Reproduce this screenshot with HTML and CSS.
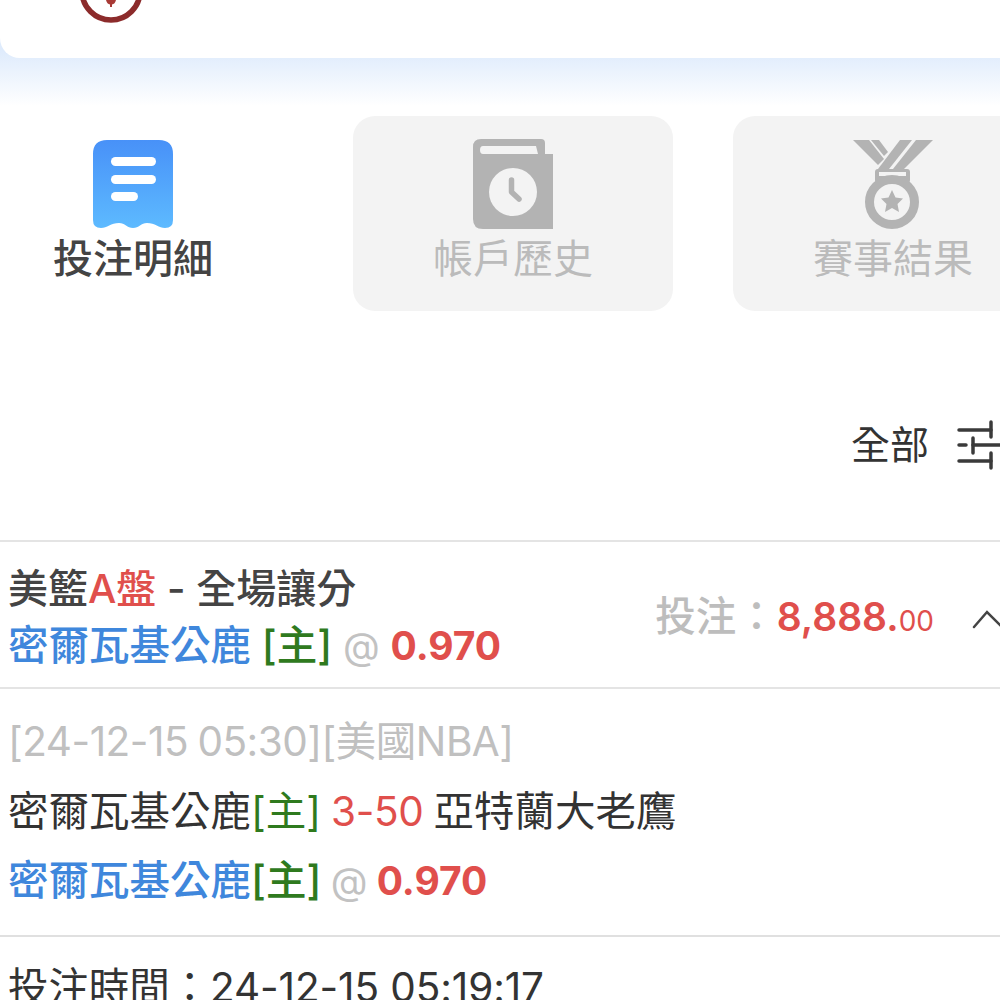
FILE: index.html
```html
<!DOCTYPE html>
<html lang="zh-Hant">

<head>
    <meta charset="UTF-8">
    <meta name="viewport" content="width=device-width, initial-scale=1.0">
    <title>投注明細</title>
    <link rel="stylesheet" href="styles.css">
</head>

<body>

    <div class="top">
        <div class="top-card">
            <svg class="logo" width="66" height="24" viewBox="0 0 66 24">
                <circle cx="33" cy="-9" r="29" fill="none" stroke="#8c2b2b" stroke-width="5.500" />
                <path d="M28 0 H38 Q37 4 34 4.500 V7 H32 V4.500 Q29 4 28 0 Z" fill="#a83a36" />
            </svg>
        </div>
    </div>

    <!-- tabs -->
    <div class="tabs">
        <div class="tab tab-active">
            <svg class="tab-icon" width="80" height="90" viewBox="0 0 80 90">
                <defs>
                    <linearGradient id="docFill" x1="0" y1="0" x2="0" y2="1">
                        <stop offset="0" stop-color="#4891f8" />
                        <stop offset="1" stop-color="#5dbaff" />
                    </linearGradient>
                </defs>
                <path d="M14 1 H66 Q80 1 80 15 V81 Q80 89 72 89 C66 89 62 84 54 84 C48 84 46 89 40 89 C34 89 32 84 26 84 C18 84 14 89 8 89 Q0 89 0 81 V15 Q0 1 14 1 Z" fill="url(#docFill)" />
                <rect x="18" y="18" width="45" height="9" rx="4.500" fill="#fff" />
                <rect x="18" y="36" width="45" height="9" rx="4.500" fill="#fff" />
                <rect x="18" y="53" width="27" height="9" rx="4.500" fill="#fff" />
            </svg>
            <div>投注明細</div>
        </div>
        <div class="tab">
            <svg class="tab-icon" width="80" height="90" viewBox="0 0 80 90">
                <path d="M8 0 H68 Q72 0 72 4 V15 H80 V90 H10 Q0 90 0 80 V8 Q0 0 8 0 Z" fill="#b3b3b3" />
                <path d="M10 7 H63 L65 15 H10 Q7 15 7 11 Q7 7 10 7 Z" fill="#f3f3f3" />
                <circle cx="40" cy="53" r="24" fill="#f3f3f3" />
                <path d="M38.500 41 V53 L46 60" fill="none" stroke="#b3b3b3" stroke-width="5.500" stroke-linecap="round" stroke-linejoin="round" />
            </svg>
            <div>帳戶歷史</div>
        </div>
        <div class="tab">
            <svg class="tab-icon" width="80" height="90" viewBox="0 0 80 90">
                <path d="M0 1 H16 L31 20 L25 26 Z" fill="#b3b3b3" />
                <path d="M18 1 H26 L35 13 L31 17 Z" fill="#b3b3b3" />
                <path d="M47 1 H59 L36 30 H25 Z" fill="#b3b3b3" />
                <path d="M63 1 H80 L51 30 H40 Z" fill="#b3b3b3" />
                <rect x="22" y="30" width="35" height="14" rx="3" fill="#b3b3b3" />
                <rect x="26" y="33" width="27" height="4" fill="#f3f3f3" />
                <circle cx="39" cy="63" r="22.500" fill="#f3f3f3" stroke="#b3b3b3" stroke-width="9" />
                <path d="M39 51 L42.500 58.500 L50 59.500 L44.500 65 L46 73 L39 69 L32 73 L33.500 65 L28 59.500 L35.500 58.500 Z" fill="#b3b3b3" />
            </svg>
            <div>賽事結果</div>
        </div>
    </div>

    <div class="filter">
        <span>全部</span>
        <svg class="filter-icon" width="43" height="50" viewBox="0 0 43 50">
            <g fill="none" stroke="#3a3a3a" stroke-width="3.500" stroke-linecap="round">
                <path d="M2 10 H34" />
                <path d="M34 2 V17" />
                <path d="M2 25 H9" />
                <path d="M16 18 V33" />
                <path d="M16 25 H43" />
                <path d="M2 41 H34" />
                <path d="M34 33 V48" />
            </g>
        </svg>
    </div>

    <div class="bet-head">
        <div class="bet-title">
            <div class="line-type">美籃<span class="red">A盤</span> - 全場讓分</div>
            <div class="line-pick"><span class="blue">密爾瓦基公鹿</span> <span class="green">[主]</span> <span class="at">@</span> <span class="odds">0.970</span></div>
        </div>
        <div class="bet-amount">
            <span class="amount-label">投注：</span><span class="amount">8,888.<small>00</small></span>
            <svg class="chevron" width="28" height="28" viewBox="0 0 28 28">
                <path d="M2 24 L15 9 L30 24" fill="none" stroke="#444" stroke-width="2.500" stroke-linecap="round" />
            </svg>
        </div>
    </div>

    <div class="bet-detail">
        <div class="detail-line gray">[24-12-15 05:30][美國NBA]</div>
        <div class="detail-line">密爾瓦基公鹿<span class="green-thin">[主]</span> <span class="score">3-50</span> 亞特蘭大老鷹</div>
        <div class="detail-line pick"><span class="blue">密爾瓦基公鹿</span><span class="green">[主]</span> <span class="at">@</span> <span class="odds">0.970</span></div>
    </div>

    <div class="bet-time">投注時間：24-12-15 05:19:17</div>

</body>

</html>
```

FILE: styles.css
```css
body {
    font-family: Inter, "Noto Sans CJK TC", sans-serif;
    margin: 0;
    padding: 0;
    height: 1000px;
    overflow: hidden;
    background-color: #fff;
    color: #333;
}

.top {
    height: 116px;
    background: linear-gradient(to bottom, #deebfc 50px, #fff 106px);
}

.top-card {
    height: 58px;
    background-color: #fff;
    border-bottom-left-radius: 20px;
}

.logo {
    display: block;
    margin-left: 78px;
}

.tabs {
    display: flex;
    gap: 60px;
    margin-left: -27px;
    width: 1027px;
    overflow: hidden;
}

.tab {
    flex: 0 0 320px;
    height: 195px;
    box-sizing: border-box;
    padding-top: 23px;
    background-color: #f3f3f3;
    border-radius: 22px;
    text-align: center;
    font-size: 40px;
    line-height: 60px;
    color: #bbb;
}

.tab-active {
    background-color: #fff;
    color: #444;
    font-weight: 500;
}

.tab-icon {
    display: block;
    margin: 0 auto;
}

.filter {
    display: flex;
    justify-content: flex-end;
    align-items: center;
    gap: 28px;
    height: 229px;
    box-sizing: border-box;
    padding-top: 39px;
    font-size: 39px;
    line-height: 50px;
    color: #333;
}

.bet-head {
    display: flex;
    justify-content: space-between;
    align-items: center;
    height: 149px;
    box-sizing: border-box;
    padding-left: 8px;
    padding-top: 6px;
    border-top: 2px solid #e4e4e4;
    border-bottom: 2px solid #e4e4e4;
    font-size: 40.500px;
    line-height: 57px;
}

.line-type {
    color: #444;
    font-weight: 500;
    font-size: 40px;
}

.line-pick {
    font-weight: 500;
}

.red {
    color: #e04f4c;
}

.blue {
    color: #3f87dc;
}

.green {
    color: #2f7a1e;
}

.at {
    color: #c2c2c2;
    font-weight: normal;
    font-size: 38px;
}

.odds {
    color: #e04f4c;
    font-weight: 700;
    font-size: 39px;
}

.bet-amount {
    display: flex;
    align-items: baseline;
    margin-top: 2px;
}

.amount-label {
    color: #bdbdbd;
    font-weight: 500;
}

.amount {
    color: #e04f4c;
    font-weight: 600;
    font-size: 39px;
}

.amount small {
    font-size: 28px;
    font-weight: normal;
}

.chevron {
    margin-left: 38px;
}

.bet-detail {
    height: 248px;
    box-sizing: border-box;
    padding: 18px 8px 0;
    border-bottom: 2px solid #e0e0e0;
    font-size: 40.500px;
    line-height: 69.500px;
    color: #333;
    word-spacing: -1.500px;
}

.gray {
    color: #c0c0c0;
    letter-spacing: -0.500px;
}

.green-thin {
    color: #2f7a1e;
}

.score {
    color: #e04f4c;
    letter-spacing: -0.300px;
}

.pick {
    font-weight: 500;
}

.bet-time {
    padding: 24px 8px 0;
    font-size: 40.500px;
    line-height: 54px;
    color: #333;
    letter-spacing: -0.100px;
}
```
